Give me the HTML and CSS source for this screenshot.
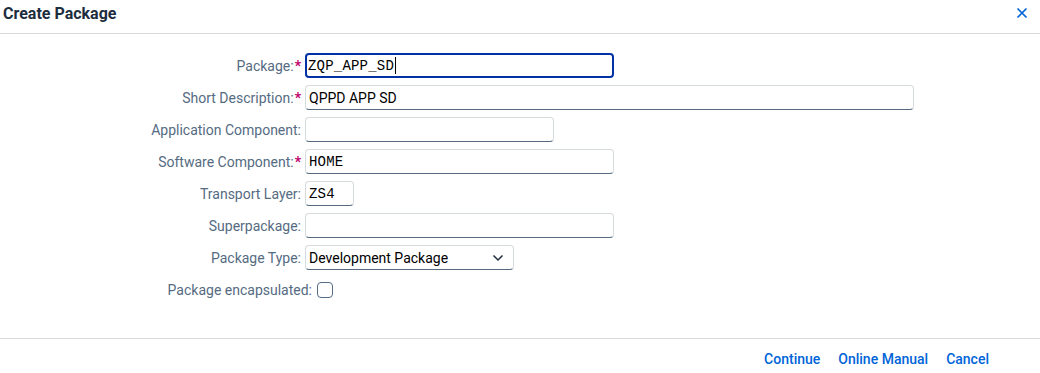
FILE: index.html
```html
<!DOCTYPE html>
<html>
<head>
<meta charset="utf-8">
<title>Create Package</title>
<link rel="stylesheet" href="styles.css">
</head>
<body>
<div class="dialog">
  <header class="header">
    <h1 class="title">Create Package</h1>
    <button class="close" aria-label="Close">
      <svg width="12" height="12" viewBox="0 0 12 12"><path d="M1.5 1.5L10.5 10.5M10.5 1.5L1.5 10.5" stroke="#0064d9" stroke-width="1.7" fill="none"/></svg>
    </button>
  </header>
  <main class="content">
    <div class="form">
      <label class="label">Package:<span class="req">*</span></label>
      <div class="field focused mono w309">ZQP_APP_SD<span class="caret"></span></div>

      <label class="label">Short Description:<span class="req">*</span></label>
      <div class="field w609">QPPD APP SD</div>

      <label class="label">Application Component:</label>
      <div class="field w249"></div>

      <label class="label">Software Component:<span class="req">*</span></label>
      <div class="field mono w309">HOME</div>

      <label class="label">Transport Layer:</label>
      <div class="field mono w49">ZS4</div>

      <label class="label">Superpackage:</label>
      <div class="field w309"></div>

      <label class="label">Package Type:</label>
      <div class="field select w209">
        <span>Development Package</span>
        <svg width="12" height="8" viewBox="0 0 12 8"><path d="M1.5 1.5L6 6L10.5 1.5" stroke="#1d2d3e" stroke-width="1.5" fill="none"/></svg>
      </div>

      <div class="check-row">
        <label class="label">Package encapsulated:</label>
        <span class="checkbox"></span>
      </div>
    </div>
  </main>
  <footer class="footer">
    <button class="btn">Continue</button>
    <button class="btn">Online Manual</button>
    <button class="btn">Cancel</button>
  </footer>
</div>
</body>
</html>
```

FILE: styles.css
```css
* { box-sizing: border-box; }
html, body { margin: 0; padding: 0; background: #fff; }
body {
  font-family: Roboto, "Liberation Sans", sans-serif;
  font-size: 14px;
  color: #1d2d3e;
}
.dialog {
  width: 1040px;
  height: 373px;
  display: flex;
  flex-direction: column;
}
.header {
  height: 34px;
  border-bottom: 1px solid #d9d9d9;
  display: flex;
  align-items: center;
  justify-content: space-between;
  padding: 0 10px 7px 3px;
}
.title {
  margin: 0;
  font-size: 16px;
  font-weight: 700;
  color: #1d2d3e;
}
.close {
  border: 0;
  background: none;
  padding: 0;
  width: 16px;
  height: 16px;
  display: flex;
  align-items: center;
  justify-content: center;
}
.content {
  flex: 1;
  padding-top: 19px;
}
.form {
  display: grid;
  grid-template-columns: 301px auto;
  column-gap: 4px;
  row-gap: 7px;
  justify-items: start;
  align-items: center;
}
.label {
  justify-self: end;
  color: #556b82;
  font-size: 14px;
  white-space: nowrap;
}
.req {
  color: #c0006a;
  font-weight: 700;
  margin-left: 1px;
}
.field {
  height: 25px;
  border: 1px solid #d5dadd;
  border-bottom-color: #556b82;
  border-radius: 4px;
  padding: 0 3px;
  display: flex;
  align-items: center;
  color: #000;
  font-size: 14px;
  background: #fff;
}
.mono {
  font-family: "Liberation Mono", "DejaVu Sans Mono", monospace;
  font-size: 14px;
  letter-spacing: 0.2px;
}
.focused {
  border: 2px solid #0032a5;
  padding: 0 1px;
}
.caret {
  display: inline-block;
  width: 1px;
  height: 17px;
  background: #000;
  margin-left: 1px;
}
.w309 { width: 309px; }
.w609 { width: 609px; }
.w249 { width: 249px; }
.w49 { width: 49px; }
.w209 { width: 209px; }
.select {
  justify-content: space-between;
  padding: 0 9px 0 3px;
}
.check-row {
  grid-column: 1 / 3;
  justify-self: start;
  width: 333px;
  display: flex;
  justify-content: flex-end;
  align-items: center;
  gap: 5px;
  margin-top: 5px;
}
.checkbox {
  width: 16px;
  height: 16px;
  border: 1px solid #556b82;
  border-radius: 4px;
  background: #fff;
}
.footer {
  height: 35px;
  border-top: 1px solid #d9d9d9;
  display: flex;
  justify-content: flex-end;
  align-items: center;
  gap: 2px;
  padding: 6px 43px 0 0;
}
.btn {
  border: 0;
  background: none;
  font-family: Roboto, "Liberation Sans", sans-serif;
  font-size: 14px;
  font-weight: 500;
  color: #0064d9;
  padding: 4px 8px;
}
```
